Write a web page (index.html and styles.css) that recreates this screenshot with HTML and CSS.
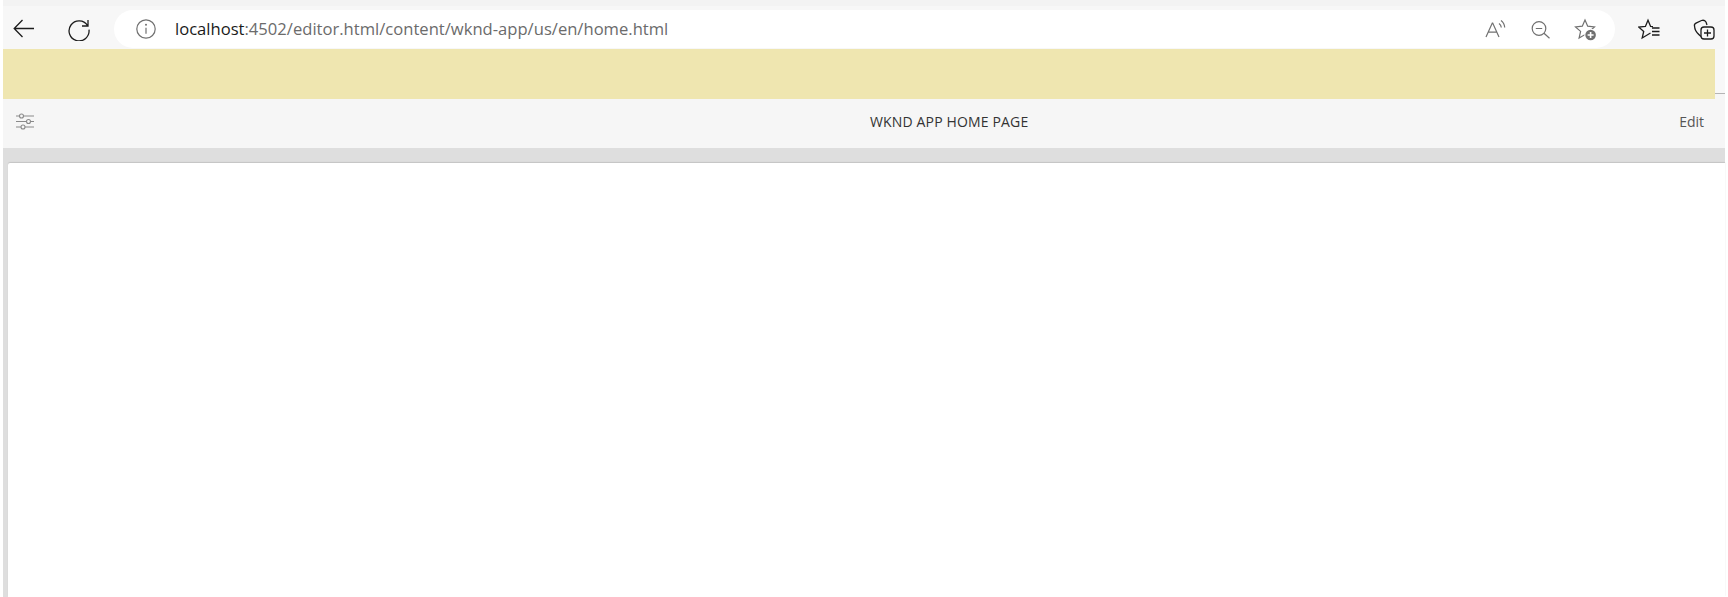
FILE: index.html
```html
<!DOCTYPE html>
<html>
  <head>
    <meta charset="UTF-8">
    <title>WKND App Home Page</title>
    <link rel="stylesheet" href="styles.css">
  </head>
  <body>
    <div class="window">
      <div class="toolbar">
        <svg class="icon back" viewBox="0 0 24 24"><path d="M22 11.500H2.500M10.500 3 2.200 11.500l8.300 8.500"/></svg>
        <svg class="icon reload" viewBox="0 0 24 24"><path d="M20.500 8.500A10 10 0 1 0 22 12.700M21 3v6h-6"/></svg>
        <div class="address">
          <svg class="icon-gray info" viewBox="0 0 20 20"><circle cx="10" cy="10" r="9.200"/><path d="M10 8.800v6"/><circle class="dot" cx="10" cy="5.800" r="1"/></svg>
          <div class="url"><span class="host">localhost</span>:4502/editor.html/content/wknd-app/us/en/home.html</div>
          <svg class="icon-gray read" viewBox="0 0 24 24"><path d="M2 20 8.300 6h.4L15 20M4.200 15.200h8.600M15 6.500c1.500 1 2.200 2.500 2.300 4M17 3.500c2.200 1.600 3.500 4 3.700 7"/></svg>
          <svg class="icon-gray zoom" viewBox="0 0 24 24"><circle cx="10" cy="11.500" r="6.800"/><path d="M6.800 11.500h6.400M15 16.200l5.500 5"/></svg>
          <svg class="icon-gray fav-add" viewBox="0 0 24 24"><path d="M11 3 13.700 9.200l6.800.7-5.100 4.500 1.500 6.700L11 17.600l-5.900 3.500 1.500-6.700L1.500 9.900l6.800-.7z"/><circle class="dot" cx="16.600" cy="18" r="6.300"/><circle class="disc" cx="16.600" cy="18" r="5.300"/><path class="plus" d="M16.600 15v6M13.600 18h6"/></svg>
        </div>
        <svg class="icon favs" viewBox="0 0 24 24"><path d="M12.500 16 10 17.500 4.200 21l1.500-6.600L.7 10l6.700-.6L10 3.200l2.600 6.200 2.400.3"/><path d="M14 11h7.500M14 14.500h7.500M14 18h7.500"/></svg>
        <svg class="icon collections" viewBox="0 0 24 24"><path d="M9 19.500C6 17 4 15 3 12l-.5-3C2 7.500 3 6.500 4.500 5.800l5-2.300C11.500 2.800 13 3.500 14 5l1 3"/><rect x="9" y="10" width="13" height="12" rx="3"/><path d="M15.500 12.500v7M12 16h7"/></svg>
      </div>

      <div class="banner-row">
        <div class="banner"></div>
        <div class="banner-rest"></div>
      </div>

      <div class="pagebar">
        <svg class="settings" viewBox="0 0 18 17"><path d="M0 3h3.500M7.500 3H18M0 8.500h10.500M14.500 8.500H18M0 14h5M9 14h9"/><circle cx="5.500" cy="3" r="2"/><circle cx="12.500" cy="8.500" r="2"/><circle cx="7" cy="14" r="2"/></svg>
        <div class="pagebar-title">WKND APP HOME PAGE</div>
        <div class="pagebar-mode">Edit</div>
      </div>

      <div class="workspace">
        <div class="canvas"></div>
      </div>
    </div>
  </body>
</html>
```

FILE: styles.css
```css
html, body {
  height: 100%;
}
body {
  margin: 0;
  background-color: #fff;
  font-family: "Open Sans", "Noto Sans", sans-serif;
  overflow: hidden;
}
.window {
  height: 100%;
  margin-left: 3px;
  margin-right: 3px;
  display: flex;
  flex-direction: column;
}

/* browser toolbar */
.toolbar {
  height: 49px;
  box-sizing: border-box;
  padding: 4px 0 1px 9px;
  display: flex;
  align-items: center;
  background-color: #f7f7f7;
  border-top: 6px solid #f3f3f3;
}
.icon, .icon-gray {
  width: 24px;
  height: 24px;
  flex: none;
  fill: none;
  stroke: #1c1c1c;
  stroke-width: 1.3;
}
.icon-gray {
  stroke: #707070;
  stroke-width: 1.2;
}
.icon-gray .dot {
  fill: #fff;
  stroke: none;
}
.info .dot {
  fill: #707070;
}
.icon-gray .disc {
  fill: #707070;
  stroke: none;
}
.icon-gray .plus {
  stroke: #fff;
  stroke-width: 1.6;
}
.reload {
  margin-left: 31px;
}
.address {
  width: 1501px;
  height: 38px;
  margin-left: 23px;
  padding: 0 17px 0 22px;
  box-sizing: border-box;
  display: flex;
  align-items: center;
  background-color: #fff;
  border-radius: 19px;
}
.info {
  width: 20px;
  height: 20px;
}
.url {
  flex: 1;
  margin-left: 19px;
  margin-bottom: 1px;
  font-size: 16.6px;
  color: #6b6b6b;
  white-space: nowrap;
}
.host {
  color: #1a1a1a;
}
.zoom, .fav-add {
  margin-left: 21px;
}
.favs {
  margin-left: 23px;
}
.collections {
  margin-left: 30px;
}

/* yellow notice */
.banner-row {
  height: 50px;
  flex: none;
  display: flex;
  background-color: #f6f6f6;
}
.banner {
  width: 1712px;
  background-color: #efe6b0;
}
.banner-rest {
  flex: 1;
  height: 44px;
  background-color: #f8f8f8;
  border-bottom: 1px solid #b5b5b5;
}

/* page title bar */
.pagebar {
  height: 49px;
  flex: none;
  box-sizing: border-box;
  padding: 0 21px 5px 13px;
  display: grid;
  grid-template-columns: 854px auto 1fr;
  align-items: center;
  background-color: #f6f6f6;
  font-size: 14px;
  color: #444;
}
.settings {
  width: 18px;
  height: 17px;
  fill: none;
  stroke: #8a8a8a;
  stroke-width: 1.1;
}
.pagebar-title {
  letter-spacing: 0.15px;
  color: #333;
}
.pagebar-mode {
  text-align: right;
  color: #555;
}

/* content area */
.workspace {
  flex: 1;
  padding: 15px 0 0 5px;
  display: flex;
  background-color: #dedede;
}
.canvas {
  flex: 1;
  background-color: #fff;
  border-top-left-radius: 2px;
  box-shadow: 0 -1px 1px #c4c4c4;
}
```
